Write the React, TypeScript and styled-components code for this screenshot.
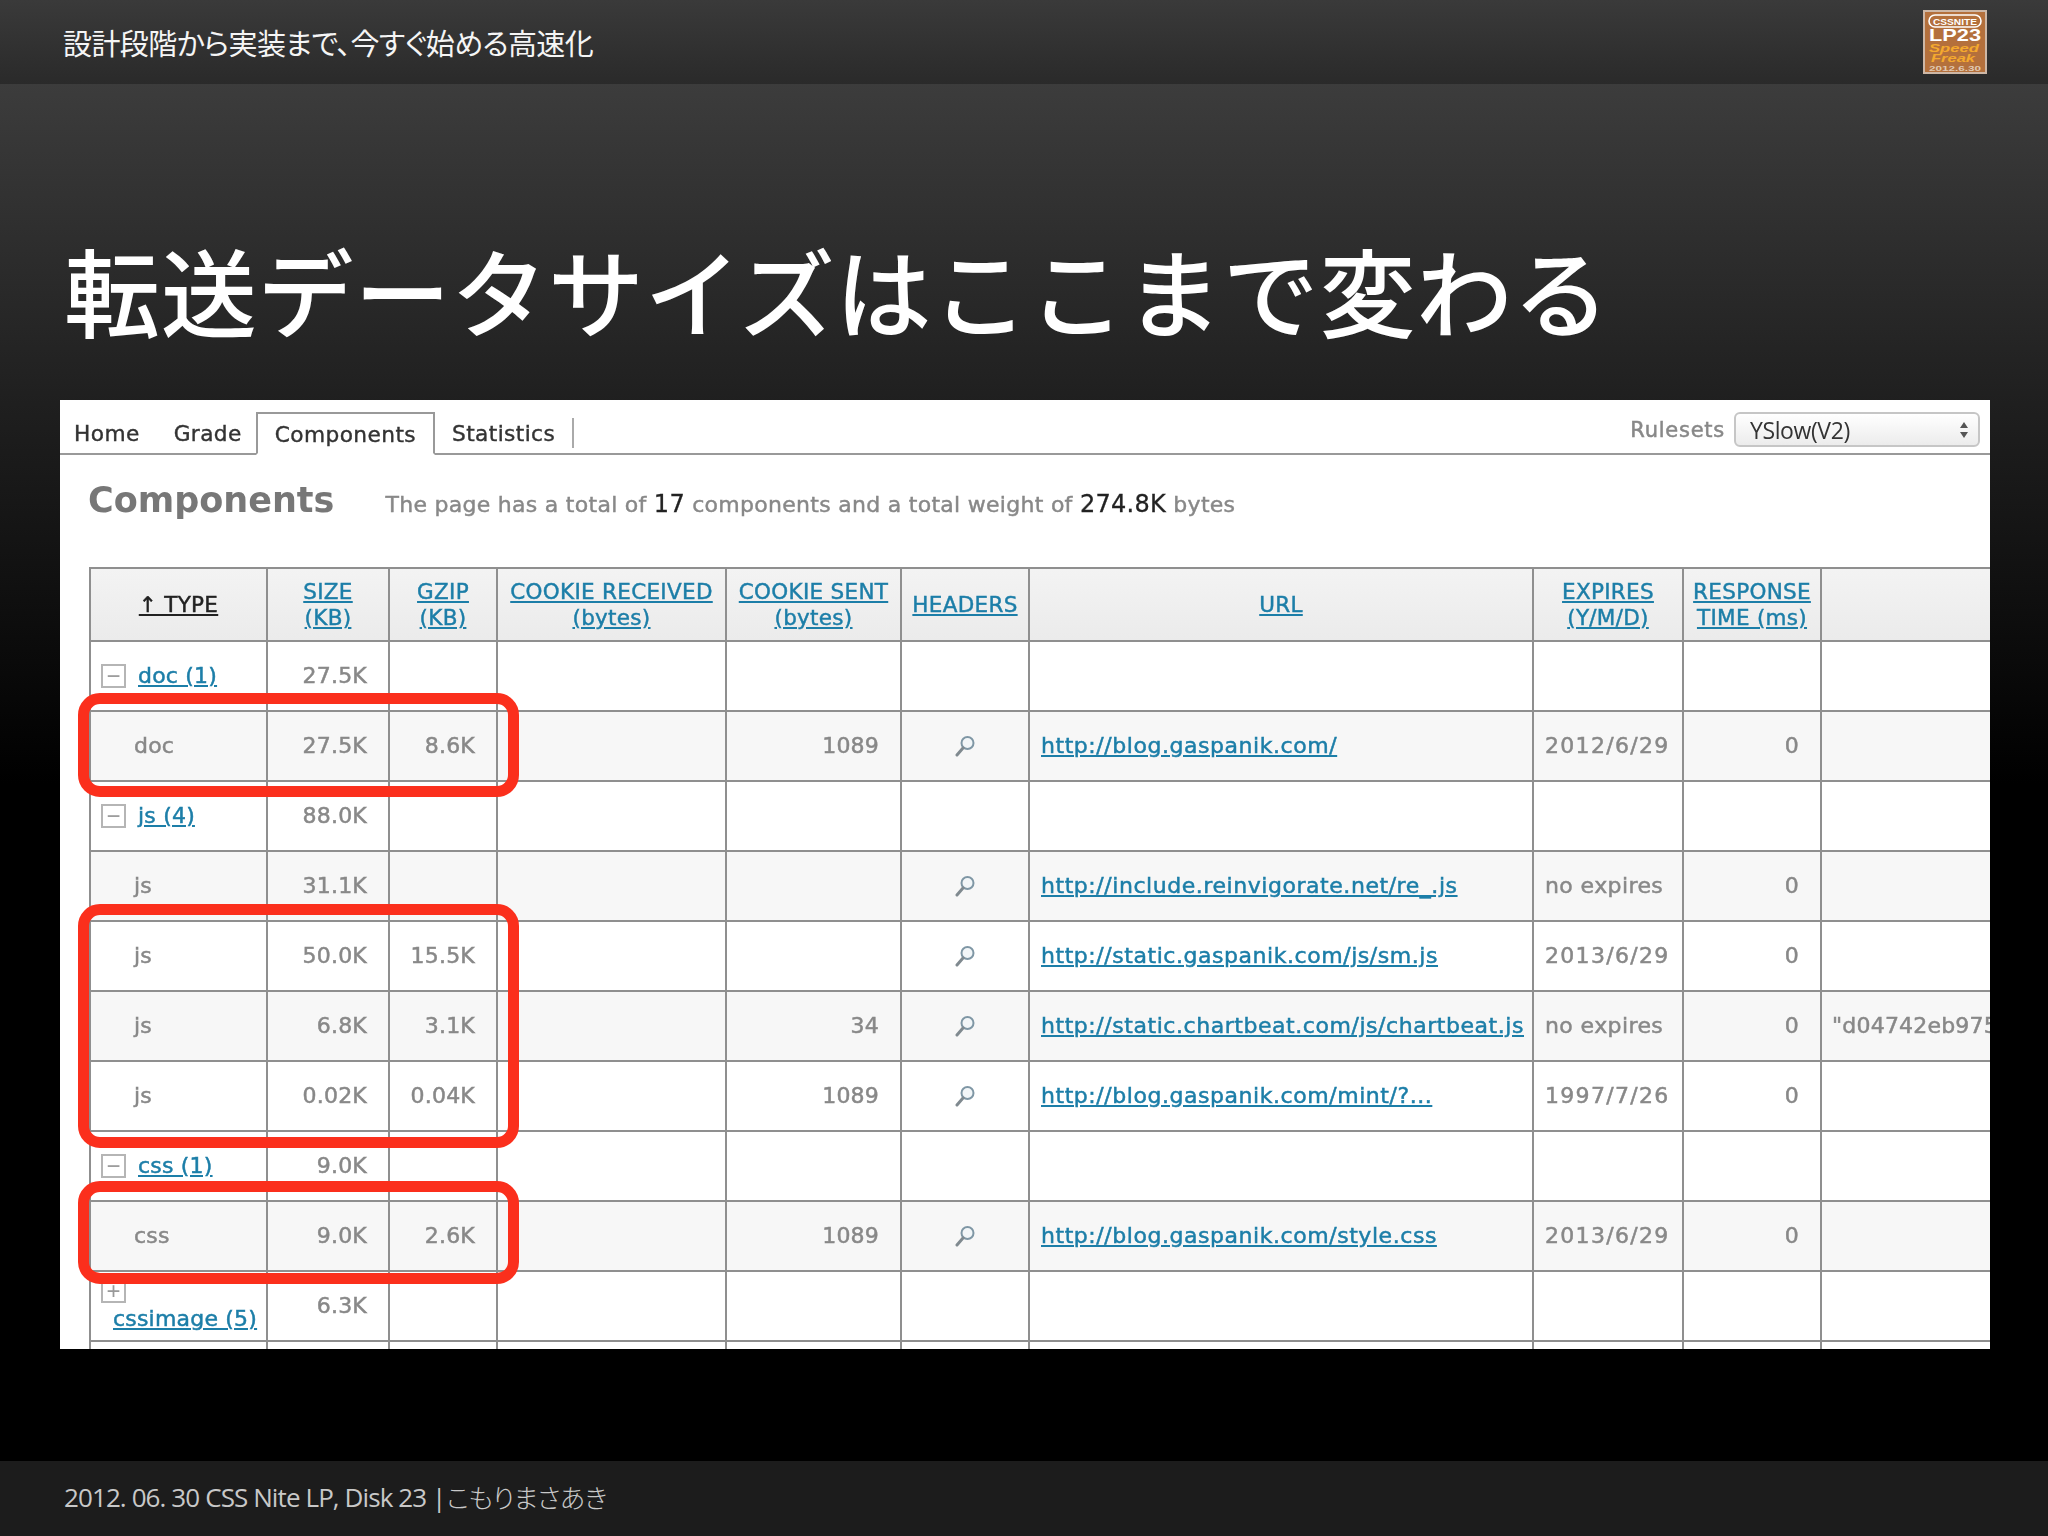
import styled, { createGlobalStyle } from "styled-components";

const GlobalStyle = createGlobalStyle`
  html, body {
    margin: 0;
    background: #000;
  }
`;

const Page = styled.div`
  width: 2048px;
  height: 1536px;
  display: flex;
  flex-direction: column;
  overflow: hidden;
  font-family: "Noto Sans CJK JP", sans-serif;
`;

const TopBar = styled.header`
  height: 84px;
  flex: none;
  display: flex;
  align-items: center;
  justify-content: space-between;
  padding: 0 61px 0 63px;
  box-sizing: border-box;
  background: linear-gradient(#3a3a3a, #2a2a2a);
`;

const TopText = styled.div`
  font-size: 29px;
  font-weight: 400;
  font-feature-settings: "palt";
  letter-spacing: -0.6px;
  color: #f5f5f5;
`;

const Main = styled.main`
  flex: 1;
  display: flex;
  flex-direction: column;
  padding: 0 58px 0 60px;
  background: linear-gradient(#3c3c3c 0, #1f1f1f 320px, #000 700px);
`;

const Title = styled.h1`
  height: 316px;
  flex: none;
  margin: 0;
  box-sizing: border-box;
  padding: 145px 0 0 4px;
  font-size: 96px;
  line-height: 120px;
  font-weight: 500;
  letter-spacing: 0.8px;
  color: #fff;
  white-space: nowrap;
`;

const Shot = styled.section`
  position: relative;
  width: 1930px;
  height: 949px;
  background: #fff;
  overflow: hidden;
  font-family: "DejaVu Sans", sans-serif;
  color: #888;
`;

const Blurred = styled.div`
  filter: blur(0.6px);
`;

const TabBar = styled.nav`
  height: 55px;
  box-sizing: border-box;
  display: flex;
  align-items: flex-end;
  border-bottom: 2px solid #999;
  padding-right: 10px;
`;

const Tab = styled.div<{ $active?: boolean }>`
  height: ${(p) => (p.$active ? "43px" : "30px")};
  box-sizing: border-box;
  padding: ${(p) => (p.$active ? "6px 17px 0" : "1px 17px 0")};
  margin: ${(p) => (p.$active ? "0 0 -2px -3px" : "0 0 5px")};
  background: #fff;
  border: ${(p) => (p.$active ? "2px solid #999" : "none")};
  border-bottom: ${(p) => (p.$active ? "2px solid #fff" : "none")};
  font-size: 21.7px;
  letter-spacing: 0.4px;
  line-height: 30px;
  color: #333;
  -webkit-text-stroke: 0.4px #333;
  &:first-child {
    padding-left: 14px;
  }
`;

const StatsTab = styled(Tab)`
  border-right: 2px solid #aaa;
`;

const Rulesets = styled.div`
  margin-left: auto;
  margin-bottom: 6px;
  display: flex;
  align-items: center;
  gap: 9px;
  font-size: 21px;
  letter-spacing: 0.75px;
  color: #888;
  -webkit-text-stroke: 0.5px #888;
`;

const SelectBox = styled.div`
  width: 246px;
  height: 35px;
  box-sizing: border-box;
  display: flex;
  align-items: center;
  justify-content: space-between;
  padding: 0 9px 0 14px;
  border: 2px solid #c6c6c6;
  border-radius: 6px;
  background: linear-gradient(#fff, #ececec);
  font-family: "Open Sans", sans-serif;
  font-size: 23px;
  letter-spacing: -0.4px;
  color: #333;
  -webkit-text-stroke: 0;
`;

const SelectArrows = styled.svg`
  width: 10px;
  height: 18px;
`;

const Heading = styled.div`
  height: 112px;
  box-sizing: border-box;
  padding: 25px 0 0 28px;
  display: flex;
  align-items: baseline;
  gap: 51px;
`;

const HeadingTitle = styled.h2`
  margin: 0;
  font-size: 35px;
  font-weight: 700;
  color: #777;
`;

const Summary = styled.p`
  margin: 0;
  font-size: 22px;
  letter-spacing: 0.28px;
  color: #888;
  -webkit-text-stroke: 0.45px #888;
`;

const Strong = styled.span`
  font-size: 24px;
  color: #222;
  -webkit-text-stroke: 0.3px #222;
`;

const Table = styled.table`
  margin-left: 29px;
  border-collapse: collapse;
  table-layout: fixed;
  width: 1901px;
`;

const HeadCell = styled.th`
  height: 70px;
  padding: 1px 0 0;
  border: 2px solid #8f8f8f;
  background: linear-gradient(#f3f3f3, #ebebeb);
  font-size: 21.5px;
  line-height: 26px;
  font-weight: 400;
  text-align: center;
`;

const BlankHead = styled(HeadCell)`
  border-right: none;
`;

const HeadLink = styled.a<{ $dark?: boolean }>`
  color: ${(p) => (p.$dark ? "#222" : "#1c7ea8")};
  letter-spacing: 0.3px;
  text-decoration: underline;
  -webkit-text-stroke: 0.45px ${(p) => (p.$dark ? "#222" : "#1c7ea8")};
`;

const Row = styled.tr<{ $alt?: boolean }>`
  background: ${(p) => (p.$alt ? "#f7f7f7" : "#fff")};
`;

const Cell = styled.td<{ $align?: string; $pad?: string; $spacing?: number }>`
  height: 70px;
  box-sizing: border-box;
  padding: ${(p) => p.$pad ?? "0"};
  border: 2px solid #8f8f8f;
  font-size: 22px;
  letter-spacing: ${(p) => p.$spacing ?? 0.2}px;
  line-height: 28px;
  text-align: ${(p) => p.$align ?? "left"};
  white-space: nowrap;
  color: #888;
  -webkit-text-stroke: 0.5px #888;
`;

const LastCell = styled(Cell)`
  border-right: none;
`;

const GroupLabel = styled.div<{ $wrap?: boolean }>`
  display: flex;
  flex-direction: ${(p) => (p.$wrap ? "column" : "row")};
  align-items: ${(p) => (p.$wrap ? "flex-start" : "center")};
  gap: ${(p) => (p.$wrap ? "2px" : "12px")};
  padding-left: 10px;
`;

const Toggle = styled.span`
  width: 25px;
  height: 24px;
  flex: none;
  display: flex;
  align-items: center;
  justify-content: center;
  box-sizing: border-box;
  border: 2px solid #b5b5b5;
  font-family: "Liberation Sans", sans-serif;
  font-size: 24px;
  line-height: 18px;
  color: #999;
  -webkit-text-stroke: 0;
`;

const GroupLink = styled.a<{ $wrap?: boolean }>`
  margin-left: ${(p) => (p.$wrap ? "12px" : "0")};
  color: #1c7ea8;
  text-decoration: underline;
  -webkit-text-stroke: 0.5px #1c7ea8;
`;

const UrlLink = styled.a`
  color: #1c7ea8;
  letter-spacing: 0.55px;
  text-decoration: underline;
  -webkit-text-stroke: 0.5px #1c7ea8;
`;

const MagnifierIcon = styled.svg`
  width: 22px;
  height: 22px;
  vertical-align: middle;
  margin-top: -3px;
`;

const Callout = styled.div<{ $top: number; $height: number }>`
  position: absolute;
  left: 18px;
  top: ${(p) => p.$top}px;
  width: 441px;
  height: ${(p) => p.$height}px;
  box-sizing: border-box;
  border: 11px solid #fb2f1c;
  border-radius: 22px;
`;

const BottomBar = styled.footer`
  height: 75px;
  flex: none;
  box-sizing: border-box;
  padding: 0 0 4px 64px;
  display: flex;
  align-items: center;
  gap: 1px;
  background: #1c1c1c;
  color: #c8c8c8;
  font-size: 26px;
`;

const FooterLatin = styled.span`
  font-family: "Open Sans", sans-serif;
  font-weight: 500;
  letter-spacing: -0.9px;
`;

const FooterKana = styled.span`
  font-weight: 300;
  font-feature-settings: "palt";
  letter-spacing: -0.5px;
`;

const Logo = () => (
  <svg width="64" height="64" viewBox="0 0 64 64">
    <rect x="1" y="1" width="62" height="62" fill="#b4703c" stroke="#cdb7a6" strokeWidth="2" />
    <rect x="6" y="5" width="52" height="12" rx="6" fill="none" stroke="#fff" strokeWidth="1.6" />
    <text x="32" y="14.5" textAnchor="middle" fontFamily="Liberation Sans" fontWeight="700" fontSize="9.5" fill="#fff" textLength="44" lengthAdjust="spacingAndGlyphs">
      CSSNITE
    </text>
    <text x="32" y="31" textAnchor="middle" fontFamily="Liberation Sans" fontWeight="700" fontSize="17" fill="#fff" textLength="52" lengthAdjust="spacingAndGlyphs">
      LP23
    </text>
    <text x="31" y="42" textAnchor="middle" fontFamily="Liberation Sans" fontWeight="700" fontStyle="italic" fontSize="11" fill="#f4a92e" textLength="50" lengthAdjust="spacingAndGlyphs">
      Speed
    </text>
    <text x="30" y="52" textAnchor="middle" fontFamily="Liberation Sans" fontWeight="700" fontStyle="italic" fontSize="11" fill="#f4a92e" textLength="44" lengthAdjust="spacingAndGlyphs">
      Freak
    </text>
    <text x="32" y="60.5" textAnchor="middle" fontFamily="Liberation Sans" fontWeight="700" fontSize="8" fill="#e0c9b2" textLength="52" lengthAdjust="spacingAndGlyphs">
      2012.6.30
    </text>
  </svg>
);

const Magnifier = () => (
  <MagnifierIcon viewBox="0 0 22 22">
    <circle cx="13.5" cy="8" r="6" fill="#f2f6f8" stroke="#7f97a5" strokeWidth="2" />
    <path d="M9 13 L3 20" stroke="#808a90" strokeWidth="3" strokeLinecap="round" />
  </MagnifierIcon>
);

type Item = {
  type: string;
  size: string;
  gzip?: string;
  sent?: string;
  url?: string;
  expires?: string;
  etag?: string;
  alt?: boolean;
};

type Group = {
  group: true;
  label: string;
  size: string;
  sign: string;
  wrap?: boolean;
};

const ROWS: (Item | Group)[] = [
  { group: true, label: "doc (1)", size: "27.5K", sign: "−" },
  { type: "doc", size: "27.5K", gzip: "8.6K", sent: "1089", url: "http://blog.gaspanik.com/", expires: "2012/6/29", alt: true },
  { group: true, label: "js (4)", size: "88.0K", sign: "−" },
  { type: "js", size: "31.1K", url: "http://include.reinvigorate.net/re_.js", expires: "no expires", alt: true },
  { type: "js", size: "50.0K", gzip: "15.5K", url: "http://static.gaspanik.com/js/sm.js", expires: "2013/6/29" },
  { type: "js", size: "6.8K", gzip: "3.1K", sent: "34", url: "http://static.chartbeat.com/js/chartbeat.js", expires: "no expires", etag: '"d04742eb975', alt: true },
  { type: "js", size: "0.02K", gzip: "0.04K", sent: "1089", url: "http://blog.gaspanik.com/mint/?...", expires: "1997/7/26" },
  { group: true, label: "css (1)", size: "9.0K", sign: "−" },
  { type: "css", size: "9.0K", gzip: "2.6K", sent: "1089", url: "http://blog.gaspanik.com/style.css", expires: "2013/6/29", alt: true },
  { group: true, label: "cssimage (5)", size: "6.3K", sign: "+", wrap: true },
];

const COLUMNS = [177, 122, 108, 229, 175, 128, 504, 150, 138, 200];

const HEADS = [
  ["SIZE", "(KB)"],
  ["GZIP", "(KB)"],
  ["COOKIE RECEIVED", "(bytes)"],
  ["COOKIE SENT", "(bytes)"],
  ["HEADERS"],
  ["URL"],
  ["EXPIRES", "(Y/M/D)"],
  ["RESPONSE", "TIME (ms)"],
];

const renderRow = (row: Item | Group, i: number) => {
  if ("group" in row) {
    return (
      <Row key={i}>
        <Cell>
          <GroupLabel $wrap={row.wrap}>
            <Toggle>{row.sign}</Toggle>
            <GroupLink $wrap={row.wrap}>{row.label}</GroupLink>
          </GroupLabel>
        </Cell>
        <Cell $align="right" $pad="0 21px 0 0">{row.size}</Cell>
        {COLUMNS.slice(2, 9).map((_, c) => (
          <Cell key={c} />
        ))}
        <LastCell />
      </Row>
    );
  }
  return (
    <Row key={i} $alt={row.alt}>
      <Cell $pad="0 0 0 43px">{row.type}</Cell>
      <Cell $align="right" $pad="0 21px 0 0">{row.size}</Cell>
      <Cell $align="right" $pad="0 21px 0 0">{row.gzip}</Cell>
      <Cell />
      <Cell $align="right" $pad="0 21px 0 0">{row.sent}</Cell>
      <Cell $align="center"><Magnifier /></Cell>
      <Cell $pad="0 0 0 11px"><UrlLink>{row.url}</UrlLink></Cell>
      <Cell $pad="0 0 0 11px" $spacing={row.expires?.includes("/") ? 1.3 : 0.4}>{row.expires}</Cell>
      <Cell $align="right" $pad="0 21px 0 0">0</Cell>
      <LastCell $pad="0 0 0 10px">{row.etag}</LastCell>
    </Row>
  );
};

const App = () => (
  <Page>
    <GlobalStyle />
    <TopBar>
      <TopText>設計段階から実装まで、今すぐ始める高速化</TopText>
      <Logo />
    </TopBar>
    <Main>
      <Title>転送データサイズはここまで変わる</Title>
      <Shot>
        <Blurred>
          <TabBar>
            <Tab>Home</Tab>
            <Tab>Grade</Tab>
            <Tab $active>Components</Tab>
            <StatsTab>Statistics</StatsTab>
            <Rulesets>
              Rulesets
              <SelectBox>
                YSlow(V2)
                <SelectArrows viewBox="0 0 10 18">
                  <path d="M5 1 L9 7 H1 Z M5 17 L9 11 H1 Z" fill="#555" />
                </SelectArrows>
              </SelectBox>
            </Rulesets>
          </TabBar>
          <Heading>
            <HeadingTitle>Components</HeadingTitle>
            <Summary>
              The page has a total of <Strong>17</Strong> components and a total weight of <Strong>274.8K</Strong> bytes
            </Summary>
          </Heading>
          <Table>
            <colgroup>
              {COLUMNS.map((w, i) => (
                <col key={i} width={w} />
              ))}
            </colgroup>
            <thead>
              <tr>
                <HeadCell>
                  <HeadLink $dark>↑ TYPE</HeadLink>
                </HeadCell>
                {HEADS.map((lines, i) => (
                  <HeadCell key={i}>
                    {lines.map((line, l) => (
                      <div key={l}>
                        <HeadLink>{line}</HeadLink>
                      </div>
                    ))}
                  </HeadCell>
                ))}
                <BlankHead />
              </tr>
            </thead>
            <tbody>
              {ROWS.map(renderRow)}
              <Row>
                {COLUMNS.slice(0, 9).map((_, c) => (
                  <Cell key={c} />
                ))}
                <LastCell />
              </Row>
            </tbody>
          </Table>
        </Blurred>
        <Callout $top={293} $height={104} />
        <Callout $top={504} $height={244} />
        <Callout $top={781} $height={103} />
      </Shot>
    </Main>
    <BottomBar>
      <FooterLatin>2012. 06. 30 CSS Nite LP, Disk 23 |</FooterLatin>
      <FooterKana>こもりまさあき</FooterKana>
    </BottomBar>
  </Page>
);

export default App;
